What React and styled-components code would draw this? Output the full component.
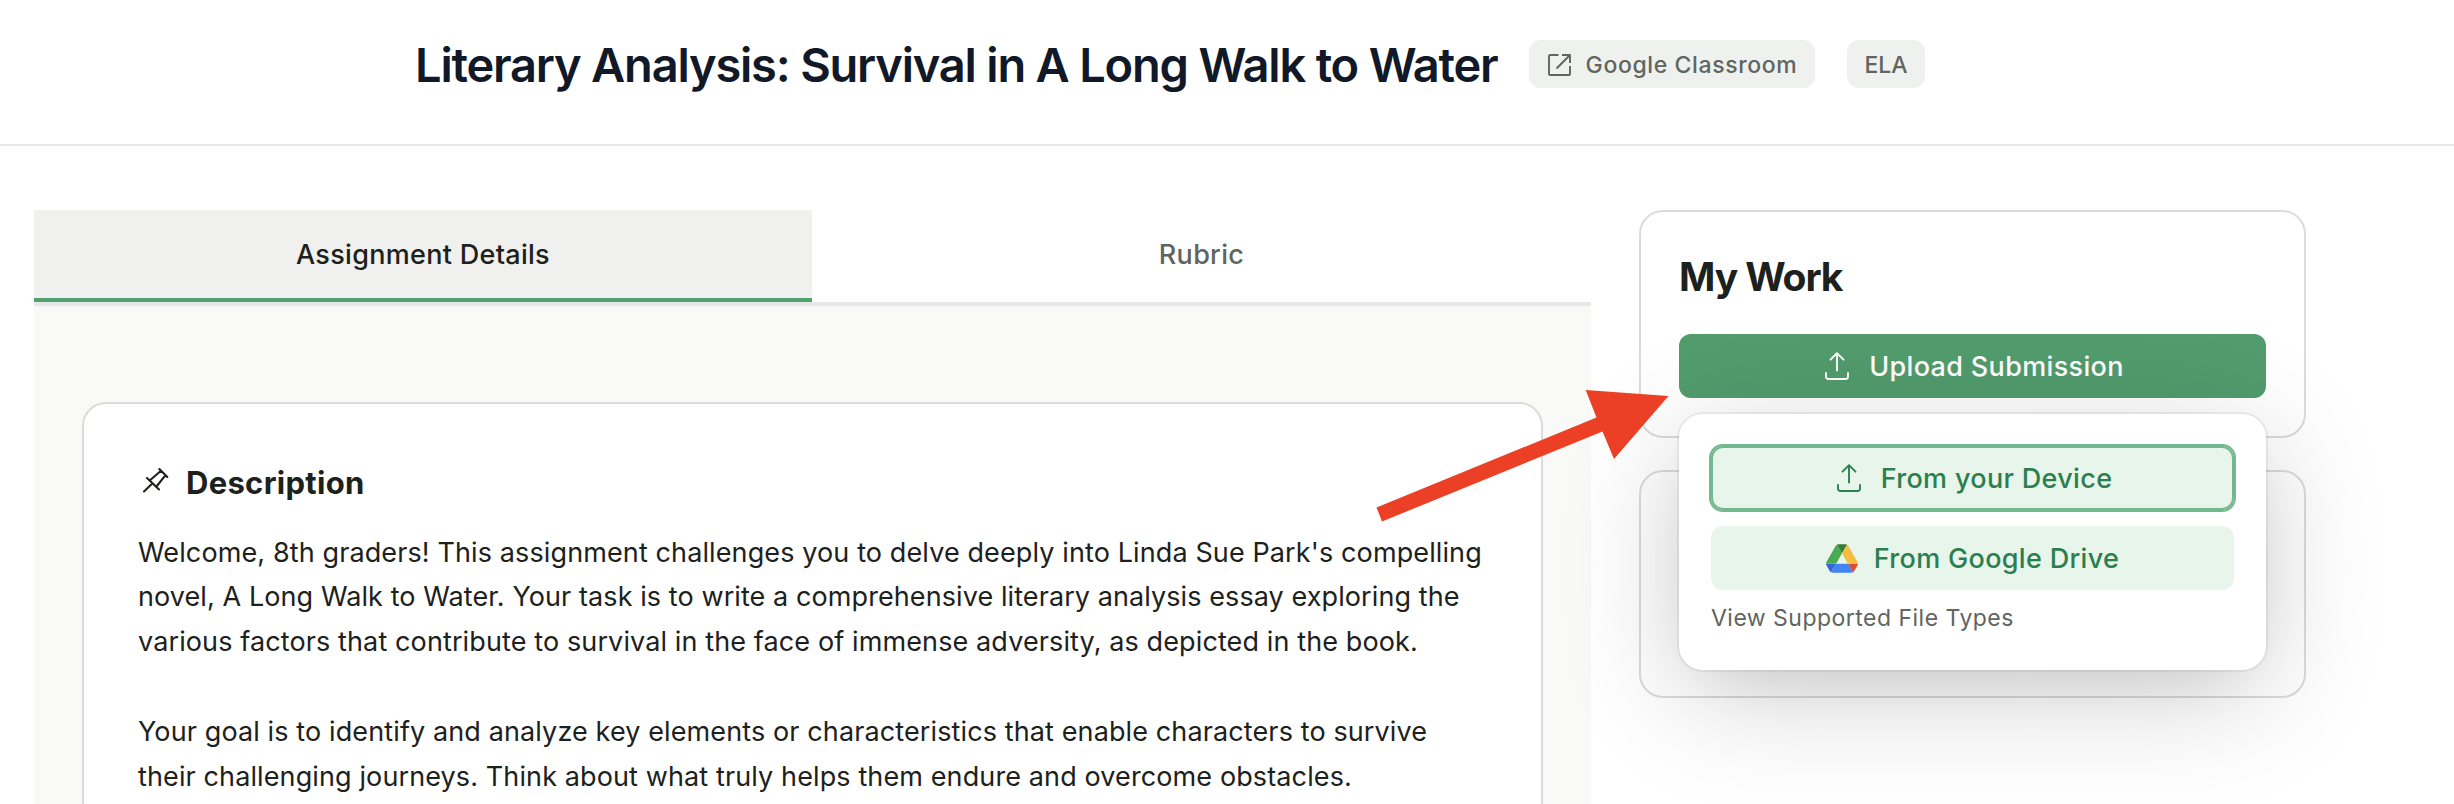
import React from 'react'
import { styled, createGlobalStyle } from 'styled-components'

const GlobalStyle = createGlobalStyle`
    * {
        box-sizing: border-box;
    }
    body {
        margin: 0;
        background: #fff;
        color: #1d211c;
        font-family: Inter, "Liberation Sans", sans-serif;
        font-optical-sizing: auto;
        overflow: hidden;
    }
    h1, h2, h3, p {
        margin: 0;
    }
    button {
        font-family: inherit;
        padding: 0;
        border: 0;
        background: none;
    }
    svg {
        display: block;
        flex: none;
    }
`

const Page = styled.div`
    height: 804px;
    overflow: hidden;
`

const Header = styled.header`
    height: 146px;
    padding: 33px 0 0 415px;
    border-bottom: 2px solid #e5e7eb;
    display: flex;
    align-items: flex-start;
`

const Title = styled.h1`
    width: 1114px;
    font-size: 47px;
    line-height: 64px;
    font-weight: 600;
    letter-spacing: -1.2px;
    color: #111827;
    white-space: nowrap;
`

const Badge = styled.span`
    width: ${props => props.$width};
    height: 48px;
    margin: 7px 32px 0 0;
    padding-top: 1px;
    border-radius: 12px;
    background: #eff1ef;
    color: #60655f;
    display: flex;
    align-items: center;
    justify-content: center;
    gap: 15px;
    font-size: 23px;
    font-weight: 500;
    letter-spacing: ${props => props.$spacing || '0'};
    white-space: nowrap;
`

const Columns = styled.main`
    display: flex;
    align-items: flex-start;
    gap: 48px;
    padding: 64px 0 0 34px;
`

const Details = styled.section`
    width: 1557px;
`

const Tabs = styled.div`
    height: 96px;
    display: grid;
    grid-template-columns: 778px 1fr;
    border-bottom: 4px solid #e5e7eb;
`

const Tab = styled.button`
    height: 92px;
    border-bottom: 4px solid ${props => props.$active ? '#52a270' : 'transparent'};
    background: ${props => props.$active ? '#f0f0ee' : 'transparent'};
    color: ${props => props.$active ? '#1d211c' : '#60655f'};
    font-size: 27px;
    font-weight: 500;
    letter-spacing: 0.3px;
`

const TabPanel = styled.div`
    height: 560px;
    padding: 96px 48px 0;
    background: #f9f9f7;
`

const DescriptionCard = styled.article`
    height: 540px;
    padding: 56px 54px;
    border: 2px solid #d9dcd8;
    border-radius: 24px;
    background: #fff;
`

const CardHeading = styled.h2`
    display: flex;
    align-items: center;
    gap: 16px;
    font-size: 31px;
    line-height: 46px;
    font-weight: 700;
    letter-spacing: 0.3px;

    svg {
        margin-bottom: 6px;
    }
`

const Paragraph = styled.p`
    margin: ${props => props.$first ? '24.6px' : '44.8px'} 0 0;
    font-size: 27px;
    line-height: 44.8px;
    white-space: nowrap;
`

const Line = styled.span`
    display: block;
    letter-spacing: ${props => props.$spacing || '0.115px'};
`

const Sidebar = styled.aside`
    width: 667px;
    display: flex;
    flex-direction: column;
    gap: 32px;
`

const Card = styled.div`
    position: relative;
    height: 228px;
    padding: 40px 38px;
    border: 2px solid #dadcd9;
    border-radius: 24px;
    background: #fff;
`

const CardTitle = styled.h3`
    font-size: 39px;
    line-height: 50px;
    font-weight: 700;
    letter-spacing: -1.1px;
`

const Button = styled.button`
    width: 100%;
    height: 64px;
    border-radius: 12px;
    display: flex;
    flex: none;
    align-items: center;
    justify-content: center;
    gap: 16px;
    background: ${props => props.$solid ? '#529c6d' : '#e8f5eb'};
    color: ${props => props.$solid ? '#fff' : '#2b7f4f'};
    box-shadow: ${props => props.$focused ? '0 0 0 2px #73b88f, inset 0 0 0 2px #73b88f' : 'none'};
    font-size: 27px;
    font-weight: 500;
    letter-spacing: 0.33px;
    white-space: nowrap;
`

const UploadButton = styled(Button)`
    width: 587px;
    margin-top: 32px;
`

const Menu = styled.div`
    position: absolute;
    top: 202px;
    left: 38px;
    z-index: 2;
    width: 587px;
    height: 256px;
    padding: 32px;
    border-radius: 24px;
    background: #fff;
    box-shadow: 0 0 0 2px rgba(0, 15, 0, 0.06), 0 24px 120px rgba(0, 0, 0, 0.19), 0 24px 64px -32px rgba(0, 15, 0, 0.12);
    display: flex;
    flex-direction: column;
    gap: 16px;
`

const FileTypes = styled.p`
    margin-top: -4px;
    font-size: 23px;
    line-height: 32px;
    letter-spacing: 0.48px;
    color: #60655f;
`

const Arrow = styled.svg`
    position: absolute;
    left: 1370px;
    top: 380px;
    z-index: 3;
`

function UploadIcon() {
    return (
        <svg width="32" height="32" viewBox="0 0 32 32" fill="none" stroke="currentColor" strokeWidth="1.9" strokeLinecap="round" strokeLinejoin="round">
            <path d="M16 20.500V3.200M9.500 9.700 16 3.200l6.500 6.500M5 23v3.500a2.500 2.500 0 0 0 2.500 2.500h17a2.500 2.500 0 0 0 2.500-2.500V23" />
        </svg>
    )
}

function ExternalIcon() {
    return (
        <svg width="24" height="24" viewBox="0 0 24 24" fill="none" stroke="currentColor" strokeWidth="1.9" strokeLinejoin="round">
            <path d="M11.500 2H3a1 1 0 0 0-1 1v18a1 1 0 0 0 1 1h19a1 1 0 0 0 1-1v-8M15 2h8v8M23 2 9.500 15.500" />
        </svg>
    )
}

function PinIcon() {
    return (
        <svg width="32" height="32" viewBox="0 0 32 32" fill="none" stroke="currentColor" strokeWidth="2.1" strokeLinecap="round">
            <path d="M21.300 5l8 8M23 6.700 12.300 16M27.500 11.200 18.500 22.500M9 14l12 11.500M14 19.700 6 27.500" />
        </svg>
    )
}

function DriveIcon() {
    return (
        <svg width="32" height="29" viewBox="0 0 87.3 78">
            <path d="m6.6 66.850 3.850 6.650c.8 1.400 1.950 2.500 3.300 3.300l13.750-23.800h-27.500c0 1.550.4 3.100 1.200 4.500z" fill="#3367d6" />
            <path d="m43.650 25-13.750-23.800c-1.350.8-2.500 1.900-3.300 3.300l-25.400 44a9.060 9.060 0 0 0-1.200 4.500h27.500z" fill="#4bab53" />
            <path d="m73.550 76.800c1.350-.8 2.500-1.900 3.300-3.300l1.600-2.750 7.650-13.250c.8-1.400 1.200-2.950 1.200-4.500h-27.502l5.852 11.500z" fill="#d94f3a" />
            <path d="m43.650 25 13.750-23.800c-1.350-.8-2.900-1.200-4.500-1.200h-18.500c-1.600 0-3.150.45-4.500 1.200z" fill="#357e35" />
            <path d="m59.800 53h-32.300l-13.750 23.800c1.350.8 2.900 1.200 4.500 1.200h50.800c1.600 0 3.150-.45 4.500-1.200z" fill="#4384f5" />
            <path d="m73.400 26.500-12.700-22c-.8-1.400-1.950-2.500-3.300-3.300l-13.750 23.800 16.150 28h27.450c0-1.550-.4-3.100-1.200-4.500z" fill="#f5be40" />
        </svg>
    )
}

export default function App() {
    return (
        <Page>
            <GlobalStyle />
            <Header>
                <Title>Literary Analysis: Survival in A Long Walk to Water</Title>
                <Badge $width="286px" $spacing="0.62px"><ExternalIcon />Google Classroom</Badge>
                <Badge $width="78px">ELA</Badge>
            </Header>
            <Columns>
                <Details>
                    <Tabs>
                        <Tab $active>Assignment Details</Tab>
                        <Tab>Rubric</Tab>
                    </Tabs>
                    <TabPanel>
                        <DescriptionCard>
                            <CardHeading><PinIcon />Description</CardHeading>
                            <Paragraph $first>
                                <Line>Welcome, 8th graders! This assignment challenges you to delve deeply into Linda Sue Park's compelling</Line>
                                <Line $spacing="0.085px">novel, A Long Walk to Water. Your task is to write a comprehensive literary analysis essay exploring the</Line>
                                <Line>various factors that contribute to survival in the face of immense adversity, as depicted in the book.</Line>
                            </Paragraph>
                            <Paragraph>
                                <Line>Your goal is to identify and analyze key elements or characteristics that enable characters to survive</Line>
                                <Line>their challenging journeys. Think about what truly helps them endure and overcome obstacles.</Line>
                            </Paragraph>
                        </DescriptionCard>
                    </TabPanel>
                </Details>
                <Sidebar>
                    <Card>
                        <CardTitle>My Work</CardTitle>
                        <UploadButton $solid><UploadIcon />Upload Submission</UploadButton>
                        <Menu>
                            <Button $focused><UploadIcon />From your Device</Button>
                            <Button><DriveIcon />From Google Drive</Button>
                            <FileTypes>View Supported File Types</FileTypes>
                        </Menu>
                    </Card>
                    <Card />
                </Sidebar>
            </Columns>
            <Arrow width="310" height="150" viewBox="1370 380 310 150">
                <path d="M1376.500 507.500 1596.500 417.500 1585.700 390 1668.500 396 1614 459 1602.500 431.500 1382 521.500Z" fill="#eb4026" />
            </Arrow>
        </Page>
    )
}
